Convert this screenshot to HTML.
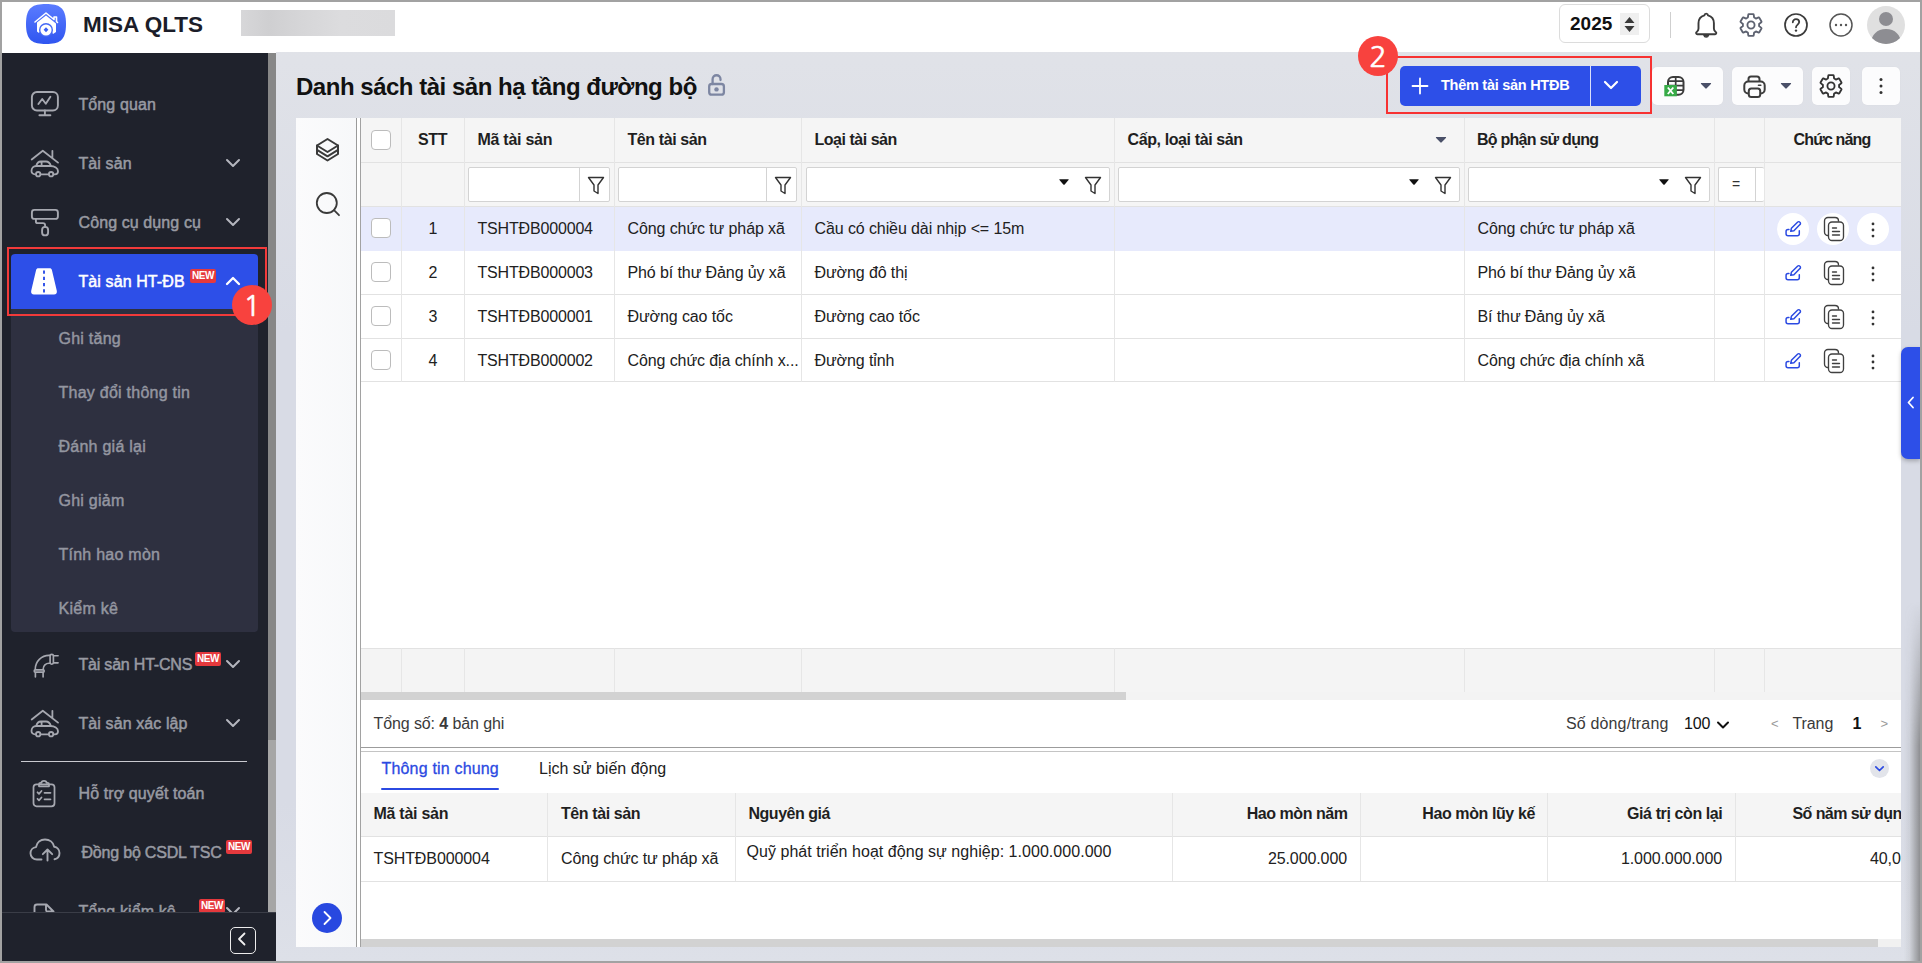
<!DOCTYPE html>
<html lang="vi">
<head>
<meta charset="utf-8">
<title>MISA QLTS</title>
<style>
*{box-sizing:border-box;margin:0;padding:0}
html,body{width:1922px;height:963px;overflow:hidden;background:#a2a2a2;font-family:"Liberation Sans",sans-serif;color:#1f1f1f}
.abs{position:absolute}
#app{position:absolute;left:2px;top:2px;width:1918px;height:959px;background:linear-gradient(180deg,#e1e3e8 0,#e0e2e8 60px,#d8dbe5 330px,#d8dbe5 800px,#dde0e8 100%);overflow:hidden}
/* header */
#hdr{position:absolute;left:0;top:0;width:1918px;height:50px;background:#fff;z-index:5}
#hstrip{position:absolute;left:0;top:50px;width:274px;height:1px;background:#fff;z-index:5}
#logo{position:absolute;left:24px;top:2px;width:40px;height:40px}
#brand{position:absolute;left:81px;top:9px;font-size:22.5px;font-weight:bold;color:#1b1d29;line-height:28px;white-space:nowrap}
#blur{position:absolute;left:239px;top:8px;width:154px;height:26px;background:linear-gradient(90deg,#d7d7d9,#cfcfd1 18%,#d6d6d8 40%,#dcdcde 65%,#dbdbdd)}
#year{position:absolute;left:1557px;top:2px;width:91px;height:39px;border:1px solid #dcdcdc;border-radius:6px;background:#fff}
#year span{position:absolute;left:10px;top:7px;font-size:19px;font-weight:bold;color:#111;line-height:24px}
#year i{position:absolute;left:60px;top:8px;width:19px;height:22px;background:#efefef;display:block}
#hsep{position:absolute;left:1668px;top:10px;width:1px;height:26px;background:#cfcfcf}
.hic{position:absolute;top:10px;width:26px;height:26px}
#avatar{position:absolute;left:1865px;top:4px;width:38px;height:38px;border-radius:50%;background:#e0e0e0;overflow:hidden}
/* sidebar */
#side{position:absolute;left:0;top:50px;width:266px;height:909px;background:#1f222c;overflow:hidden}
#sscroll{position:absolute;left:266px;top:50px;width:8px;height:909px;background:#a6a6a6}
#sthumb{position:absolute;left:0;top:0;width:8px;height:688px;background:#878787}
.mi{position:absolute;left:0;width:266px;height:56px}
.mi .ic{position:absolute;left:27px;top:13px;width:30px;height:30px}
.mi .tx{position:absolute;left:76.5px;top:18px;font-size:16px;line-height:22px;color:#989aa2;white-space:nowrap;-webkit-text-stroke:0.5px #989aa2;letter-spacing:0.1px}
.mi .chev{position:absolute;left:222.7px;top:22px;width:16px;height:12px}
.new{position:absolute;height:14px;border-radius:2px;background:#e5393d;color:#fff;font-size:10px;font-weight:bold;line-height:14px;padding:0 2px;letter-spacing:-0.5px}
#act{position:absolute;left:9px;top:202px;width:247px;height:55px;background:#2d4fe8;border-radius:4px 4px 0 0}
#sub{position:absolute;left:9px;top:257px;width:247px;height:323px;background:#2e3040;border-radius:0 0 4px 4px}
.si{position:absolute;left:47.5px;margin-top:1px;font-size:16px;line-height:22px;color:#9496a0;white-space:nowrap;-webkit-text-stroke:0.45px #9496a0;letter-spacing:0.25px}
#redbox1{position:absolute;left:5px;top:195px;width:260px;height:69px;border:2px solid #f23a3a}
.num{position:absolute;width:40px;height:40px;border-radius:50%;background:#f8423e;color:#fff;font-family:"NanumGothic","Liberation Sans",sans-serif;font-size:29px;line-height:42px;text-align:center;-webkit-text-stroke:0.5px #fff;z-index:9}
#sdiv{position:absolute;left:19px;top:709px;width:226px;height:1px;background:#c9cad0}
#sfoot{position:absolute;left:0;top:860px;width:274px;height:49px;background:#1f222c;border-top:1px solid #3a3d47}
#collapse{position:absolute;left:227.5px;top:14px;width:26.5px;height:26.5px;border:1.8px solid #ececec;border-radius:5px}
/*MAINCSS*/
#main{position:absolute;left:0;top:0;width:1918px;height:959px;pointer-events:none}
#title{position:absolute;left:294px;top:70px;font-size:24px;font-weight:bold;line-height:30px;color:#111;white-space:nowrap;letter-spacing:-0.48px}
#addbtn{position:absolute;left:1398px;top:64px;width:241px;height:40px;background:#2d4fe8;border-radius:5px}
#addbtn span{position:absolute;left:41px;top:10px;font-size:14.5px;font-weight:bold;color:#fff;line-height:18px;white-space:nowrap;letter-spacing:-0.27px}
#addbtn i{position:absolute;left:190px;top:0;width:1px;height:40px;background:#d9dffb}
#redbox2{position:absolute;left:1384px;top:54px;width:266px;height:58px;border:2px solid #f73232}
.tbtn{position:absolute;top:65px;height:38px;background:#fcfcfd;border-radius:5px;box-shadow:0 0 1px rgba(0,0,0,.08)}
#card{position:absolute;left:294px;top:116px;width:1605px;height:829px;background:#fff;overflow:hidden}
#lstrip{position:absolute;left:0;top:0;width:60px;height:829px;background:linear-gradient(90deg,#fbfbfc,#f7f8fa)}
.vl{position:absolute;top:0;width:1px;height:829px}
#ghead{position:absolute;background:#f5f5f5}
#gfoot{position:absolute;background:#f4f4f4}
#dhead{position:absolute;background:#f5f5f5}
.sel{position:absolute;background:#e7eafc}
.hl{position:absolute;height:1px;background:#e2e2e2}
.cl{position:absolute;width:1px;background:#e6e6e6;z-index:2}
.th{position:absolute;font-size:16px;font-weight:bold;line-height:22px;color:#1f1f1f;white-space:nowrap;letter-spacing:-0.45px}
.td{position:absolute;z-index:2;font-size:16px;line-height:22px;color:#212121;white-space:nowrap;letter-spacing:-0.1px}
.cb{position:absolute;z-index:2;width:20px;height:20px;border:1px solid #bcbcbc;border-radius:4px;background:#fff}
.fb{position:absolute;height:35px;background:#fff;border:1px solid #d3d3d3;border-radius:2px}
.fb i{position:absolute;top:0;width:1px;height:33px;background:#d3d3d3;display:block}
.pg{position:absolute;font-size:16px;line-height:22px;color:#3a3a3a;white-space:nowrap;letter-spacing:-0.1px}
.tab{position:absolute;font-size:16px;line-height:22px;color:#212121;white-space:nowrap}
#rtab{position:absolute;left:1899px;top:345px;width:19px;height:112px;background:#2d4fe8;border-radius:7px 0 0 7px;box-shadow:0 2px 4px rgba(0,0,0,.25)}
#rshadow{position:absolute;left:1902px;top:600px;width:16px;height:359px;background:linear-gradient(90deg,rgba(120,120,120,0),rgba(120,120,120,.12) 35%,rgba(110,110,110,.7));-webkit-mask-image:linear-gradient(180deg,transparent,#000 40%);mask-image:linear-gradient(180deg,transparent,#000 40%)}
/*MAINCSS-END*/
</style>
</head>
<body>
<div id="app">
<!--HEADER-->
<div id="hstrip"></div>
<div id="hdr">
  <svg id="logo" viewBox="0 0 40 40">
    <defs><linearGradient id="lg" x1="0" y1="0" x2="0" y2="1"><stop offset="0" stop-color="#5b7cff"/><stop offset="1" stop-color="#2f55f0"/></linearGradient></defs>
    <path d="M20 0C33 0 40 3 40 20C40 37 33 40 20 40C7 40 0 37 0 20C0 3 7 0 20 0Z" fill="url(#lg)"/>
    <path d="M9 18 L20 9 L28 15.5 V13 H30.5 V17.5 L31.5 18.5" fill="none" stroke="#fff" stroke-width="1.6" stroke-linejoin="round" stroke-linecap="round"/>
    <path d="M11 18.5 L20 11.5 L30 19.5 V28 L27 30 A8 8 0 0 0 13 29 L11 27.5Z" fill="#fff"/>
    <circle cx="20" cy="26" r="7" fill="#4468f5"/>
    <circle cx="20" cy="26" r="5.6" fill="#fff"/>
    <path d="M20 23.3 L22.4 25.8 L20 28.3 L17.6 25.8Z" fill="#3a5ff2"/>
  </svg>
  <div id="brand">MISA QLTS</div>
  <div id="blur"></div>
  <div id="year"><span>2025</span><i></i>
    <svg class="abs" style="left:63px;top:11px" width="13" height="17" viewBox="0 0 13 17"><path d="M6.5 1 L11.5 7 H1.5Z M6.5 16 L11.5 10 H1.5Z" fill="#3a3a3a"/></svg>
  </div>
  <div id="hsep"></div>
  <!-- bell -->
  <svg class="hic" style="left:1691px;top:10px;height:28px" viewBox="0 0 26 28"><path d="M13.200 1.600c-1 0-1.700.700-1.800 1.700C7.600 4.200 5.500 7.300 5.500 11.300v5.200c0 1.200-.5 2.200-1.400 3.100l-.6.600c-.8.800-.3 2 .8 2h17.800c1.100 0 1.600-1.200.8-2l-.6-.6c-.9-.9-1.400-1.900-1.400-3.100v-5.200c0-4-2.100-7.100-5.900-8-.1-1-.8-1.700-1.800-1.700Z" fill="none" stroke="#3b3b3b" stroke-width="1.900" stroke-linejoin="round"/><path d="M10.800 23.300a2.500 2.500 0 0 0 4.800 0Z" fill="#3b3b3b" stroke="#3b3b3b" stroke-width="1.200" stroke-linejoin="round"/></svg>
  <!-- gear -->
  <svg class="hic" style="left:1736px" viewBox="0 0 24 24"><path d="M19.430 12.980c.040-.320.070-.640.070-.980s-.030-.660-.070-.980l2.110-1.650c.190-.150.240-.420.120-.640l-2-3.460c-.120-.220-.390-.300-.610-.220l-2.490 1c-.520-.400-1.080-.730-1.690-.980l-.380-2.650C14.460 2.180 14.250 2 14 2h-4c-.250 0-.460.180-.490.420l-.380 2.650c-.610.250-1.170.590-1.690.980l-2.490-1c-.230-.090-.490 0-.610.220l-2 3.460c-.130.220-.070.490.120.640l2.110 1.650c-.040.320-.070.650-.070.980s.030.660.070.980l-2.110 1.650c-.190.150-.240.420-.120.640l2 3.460c.120.220.390.300.610.220l2.490-1c.520.400 1.080.730 1.690.980l.380 2.650c.030.240.240.420.490.420h4c.250 0 .460-.180.490-.420l.380-2.650c.610-.250 1.170-.590 1.690-.980l2.490 1c.230.090.490 0 .610-.220l2-3.460c.120-.220.070-.490-.120-.640l-2.110-1.650Z" fill="none" stroke="#5d6270" stroke-width="1.700" stroke-linejoin="round"/><circle cx="12" cy="12" r="3.300" fill="none" stroke="#5d6270" stroke-width="1.700"/></svg>
  <!-- help -->
  <svg class="hic" style="left:1781px" viewBox="0 0 26 26"><circle cx="13" cy="13" r="11" fill="none" stroke="#3b3b3b" stroke-width="1.700"/><path d="M9.800 10.300c0-1.900 1.400-3.100 3.200-3.100s3.200 1.200 3.200 2.900c0 2.400-3.200 2.600-3.200 5.200" fill="none" stroke="#3b3b3b" stroke-width="1.800" stroke-linecap="round"/><circle cx="13" cy="18.600" r="1.200" fill="#3b3b3b"/></svg>
  <!-- more -->
  <svg class="hic" style="left:1826px" viewBox="0 0 26 26"><circle cx="13" cy="13" r="11" fill="none" stroke="#555" stroke-width="1.500"/><circle cx="8" cy="13" r="1.200" fill="#555"/><circle cx="13" cy="13" r="1.200" fill="#555"/><circle cx="18" cy="13" r="1.200" fill="#555"/></svg>
  <div id="avatar"><svg width="38" height="38" viewBox="0 0 38 38"><circle cx="19" cy="13" r="7" fill="#8d8d92"/><path d="M4 38c0-9 6-15 15-15s15 6 15 15Z" fill="#8d8d92"/></svg></div>
</div>
<!--SIDEBAR-->
<div id="side">
  <!-- Tong quan -->
  <div class="mi" style="top:24px">
    <svg class="ic" viewBox="-0.900 0 30 30" fill="none" stroke="#a6a8b0" stroke-width="1.900" stroke-linecap="round" stroke-linejoin="round"><rect x="2" y="3" width="26" height="18.500" rx="5"/><path d="M15 21.500v4.500M9.500 26.300h11"/><path d="M8.500 15l3.800-5 3.600 4.800 4.600-7"/></svg>
    <div class="tx">Tổng quan</div>
  </div>
  <!-- Tai san -->
  <div class="mi" style="top:83px">
    <svg class="ic" style="width:32px" viewBox="0 0 32 30" fill="none" stroke="#a6a8b0" stroke-width="1.800" stroke-linecap="round" stroke-linejoin="round"><path d="M2.700 11.500L13.800 2.700 29 14.600M23.400 2.800V10"/><path d="M6.800 26.300H6c-2 0-3.500-1.300-3.500-3.300 0-2.800 2-5 4.800-5h14.200c4.200 0 7.500 2.200 7.500 5.200 0 1.900-1.300 3.100-3.200 3.100h-1.300M11.600 26.300h8.100"/><path d="M7.300 17.800c.7-2.500 2.200-4.300 4.400-4.300h5.300c2.300 0 4 1.700 4.800 4.300M12.600 13.700v4"/><circle cx="9.200" cy="26.200" r="2.200"/><circle cx="22.100" cy="26.200" r="2.200"/></svg>
    <div class="tx">Tài sản</div>
    <svg class="chev" viewBox="0 0 16 12"><path d="M2 3l6 6 6-6" fill="none" stroke="#b4b6be" stroke-width="2" stroke-linecap="round" stroke-linejoin="round"/></svg>
  </div>
  <!-- Cong cu dung cu -->
  <div class="mi" style="top:142px">
    <svg class="ic" viewBox="-0.900 -0.400 30 30" fill="none" stroke="#a6a8b0" stroke-width="1.900" stroke-linecap="round" stroke-linejoin="round"><rect x="2" y="2.500" width="26" height="9" rx="2.500"/><path d="M6 11.500v2.500c0 1 .700 1.700 1.700 1.700h5.300c1.300 0 2.200.900 2.200 2.200v1.600"/><rect x="12.200" y="19.500" width="6" height="8.500" rx="3"/></svg>
    <div class="tx">Công cụ dụng cụ</div>
    <svg class="chev" viewBox="0 0 16 12"><path d="M2 3l6 6 6-6" fill="none" stroke="#b4b6be" stroke-width="2" stroke-linecap="round" stroke-linejoin="round"/></svg>
  </div>
  <!-- active -->
  <div id="sub">
    <div class="si" style="top:18px">Ghi tăng</div>
    <div class="si" style="top:72px">Thay đổi thông tin</div>
    <div class="si" style="top:126px">Đánh giá lại</div>
    <div class="si" style="top:180px">Ghi giảm</div>
    <div class="si" style="top:234px">Tính hao mòn</div>
    <div class="si" style="top:288px">Kiểm kê</div>
  </div>
  <div id="act"></div>
  <div class="mi" style="top:201px">
    <svg class="ic" style="top:14px" viewBox="0 0 30 30"><path d="M9.300 1.200h11.400c1.100 0 1.900.700 2.200 1.700l4.900 20.800c.500 2-.700 3.800-2.800 3.800H5c-2.100 0-3.300-1.800-2.800-3.800L7.100 2.900c.300-1 1.100-1.700 2.200-1.700Z" fill="#fff"/><path d="M15 3.600v3.200M15 9.800v3.200M15 16v3.200M15 22.200v3.200" stroke="#2d4fe8" stroke-width="1.900" fill="none"/></svg>
    <div class="tx" style="color:#fff;-webkit-text-stroke:0.5px #fff">Tài sản HT-ĐB</div>
    <div class="new" style="left:188px;top:16px">NEW</div>
    <svg class="chev" viewBox="0 0 16 12"><path d="M2 9l6-6 6 6" fill="none" stroke="#fff" stroke-width="2.300" stroke-linecap="round" stroke-linejoin="round"/></svg>
  </div>
  <div id="redbox1"></div>
    <!-- HT-CNS -->
  <div class="mi" style="top:584px">
    <svg class="ic" viewBox="0 0 30 30" fill="none" stroke="#a6a8b0" stroke-width="1.650" stroke-linecap="round" stroke-linejoin="round"><path d="M6.300 20.500V20A13.700 13.700 0 0 1 20 6.300h1M14.200 20.500V20A5.800 5.800 0 0 1 20 14.200h1"/><rect x="21.100" y="5.300" width="3.300" height="9.900" rx="1.600"/><path d="M24.800 6.700h4.300M24.800 13.800h4.300"/><rect x="5.200" y="20.800" width="10" height="2.300" rx="1.100"/><path d="M6.400 23.600v4.300M14.100 23.600v4.300"/></svg>
    <div class="tx" style="letter-spacing:-0.2px">Tài sản HT-CNS</div>
    <div class="new" style="left:193px;top:16px">NEW</div>
    <svg class="chev" viewBox="0 0 16 12"><path d="M2 3l6 6 6-6" fill="none" stroke="#b4b6be" stroke-width="2" stroke-linecap="round" stroke-linejoin="round"/></svg>
  </div>
  <!-- xac lap -->
  <div class="mi" style="top:643px">
    <svg class="ic" style="width:32px" viewBox="0 0 32 30" fill="none" stroke="#a6a8b0" stroke-width="1.800" stroke-linecap="round" stroke-linejoin="round"><path d="M2.700 11.500L13.800 2.700 29 14.600M23.400 2.800V10"/><path d="M6.800 26.300H6c-2 0-3.500-1.300-3.500-3.300 0-2.800 2-5 4.800-5h14.200c4.200 0 7.500 2.200 7.500 5.200 0 1.900-1.300 3.100-3.200 3.100h-1.300M11.600 26.300h8.100"/><path d="M7.300 17.800c.7-2.500 2.200-4.300 4.400-4.300h5.300c2.300 0 4 1.700 4.800 4.300M12.600 13.700v4"/><circle cx="9.200" cy="26.200" r="2.200"/><circle cx="22.100" cy="26.200" r="2.200"/></svg>
    <div class="tx">Tài sản xác lập</div>
    <svg class="chev" viewBox="0 0 16 12"><path d="M2 3l6 6 6-6" fill="none" stroke="#b4b6be" stroke-width="2" stroke-linecap="round" stroke-linejoin="round"/></svg>
  </div>
  <div id="sdiv"></div>
  <!-- Ho tro quyet toan -->
  <div class="mi" style="top:713px">
    <svg class="ic" viewBox="0 -0.800 30 30" fill="none" stroke="#a6a8b0" stroke-width="1.750" stroke-linecap="round" stroke-linejoin="round"><rect x="4.500" y="5.500" width="21" height="22" rx="3"/><path d="M10 5.500c0-1 .500-1.500 1.500-1.500h1c0-1.200 1-2 2.500-2s2.500.800 2.500 2h1c1 0 1.500.500 1.500 1.500v2h-10Z"/><path d="M8.500 13.500l1.500 1.500 2.500-2.800M15.500 14h6M8.500 20l1.500 1.500 2.500-2.800M15.500 20.500h6"/></svg>
    <div class="tx">Hỗ trợ quyết toán</div>
  </div>
  <!-- Dong bo -->
  <div class="mi" style="top:772px">
    <svg class="ic" style="width:32px" viewBox="0 0 32 30" fill="none" stroke="#a6a8b0" stroke-width="1.900" stroke-linecap="round" stroke-linejoin="round"><path d="M12.500 22.500H8c-3.700 0-6.500-2.700-6.500-6.200 0-3.200 2.400-5.800 5.500-6.200C7.800 5.500 11.500 2.500 16 2.500c4.600 0 8.300 3 9.200 7.200 3 .500 5.300 3 5.300 6.200 0 3-2 5.600-5 6.300"/><path d="M18.500 23.500V13M13.800 17.200l4.700-4.700 4.700 4.700"/></svg>
    <div class="tx" style="left:79.5px;letter-spacing:-0.2px">Đồng bộ CSDL TSC</div>
    <div class="new" style="left:224px;top:16px">NEW</div>
  </div>
  <!-- Tong kiem ke -->
  <div class="mi" style="top:831px">
    <svg class="ic" style="top:18px" viewBox="0 0 30 30" fill="none" stroke="#a6a8b0" stroke-width="1.900" stroke-linecap="round" stroke-linejoin="round"><path d="M5.500 27V6c0-1.500 1-2.500 2.500-2.500h9.500l7 7V27M17 3.500v5.500c0 1 .500 1.500 1.500 1.500h5.500"/></svg>
    <div class="tx">Tổng kiểm kê</div>
    <div class="new" style="left:197px;top:16px">NEW</div>
    <svg class="chev" viewBox="0 0 16 12"><path d="M2 3l6 6 6-6" fill="none" stroke="#b4b6be" stroke-width="2" stroke-linecap="round" stroke-linejoin="round"/></svg>
  </div>
</div>
<div class="num" style="left:230px;top:282.5px">1</div>
<div id="sscroll"><div id="sthumb"></div></div>
<div id="sfoot" style="top:910px"><div id="collapse"><svg width="22" height="22" viewBox="0 0 22 22"><path d="M13.500 5.500l-5.500 5.500 5.500 5.500" fill="none" stroke="#f0f0f0" stroke-width="1.800" stroke-linecap="round" stroke-linejoin="round"/></svg></div></div>
<!--SIDEBAR-END-->
<!--MAIN-->
<div id="main">
<div id="title">Danh sách tài sản hạ tầng đường bộ</div>
<svg class="abs" style="left:704px;top:70px" width="20" height="26" viewBox="0 0 20 26" fill="none" stroke="#7d86a2" stroke-width="2.300" stroke-linecap="round"><path d="M6.600 12V7.200a3.950 3.950 0 0 1 7.900 0V8"/><rect x="3.200" y="12" width="14.700" height="10.700" rx="2.500"/><circle cx="10.500" cy="17.400" r="2.200" fill="#7d86a2" stroke="none"/></svg>
<div id="addbtn"><svg class="abs" style="left:11px;top:11px" width="18" height="18" viewBox="0 0 18 18"><path d="M9 1.500v15M1.500 9h15" stroke="#fff" stroke-width="1.800" stroke-linecap="round"/></svg><span>Thêm tài sản HTĐB</span><i></i><svg class="abs" style="left:203px;top:13px" width="16" height="12" viewBox="0 0 16 12"><path d="M2 3l6 6 6-6" fill="none" stroke="#fff" stroke-width="2.200" stroke-linecap="round" stroke-linejoin="round"/></svg></div>
<div id="redbox2"></div>
<div class="num" style="left:1356px;top:34px;z-index:9">2</div>
<div class="tbtn" style="left:1650px;width:71px">
<svg class="abs" style="left:9px;top:7px" width="28" height="26" viewBox="0 0 28 26"><rect x="7" y="3" width="15.500" height="17.800" rx="5" fill="none" stroke="#3c3c3c" stroke-width="2"/><path d="M7 7.200h15.500M7 11.700h15.500M7 16.200h15.500M14.700 3v17.800" stroke="#3c3c3c" stroke-width="1.700" fill="none"/><rect x="3.300" y="11" width="12.500" height="11.300" fill="#37ab47"/><path d="M6.800 13.500l5.500 6.500M12.300 13.500l-5.500 6.500" stroke="#fff" stroke-width="1.900"/></svg>
<svg class="abs" style="left:48px;top:15px" width="12" height="8" viewBox="0 0 12 8"><path d="M1.500 1h9c.6 0 .8.500.400 1L6.700 6.300c-.4.500-1 .5-1.400 0L1.100 2c-.4-.5-.2-1 .4-1Z" fill="#4a5068"/></svg></div>
<div class="tbtn" style="left:1730px;width:71px">
<svg class="abs" style="left:9px;top:7px" width="26" height="26" viewBox="0 0 26 26" fill="none" stroke="#3c3c3c" stroke-width="2" stroke-linejoin="round"><path d="M7.500 7.500V5c0-1.700 1-2.500 2.500-2.500h6c1.500 0 2.500.800 2.500 2.500v2.500"/><rect x="3.300" y="7.500" width="20.400" height="12" rx="4"/><rect x="7.800" y="14.500" width="11.400" height="8.500" rx="2.500" fill="#fcfcfd"/><path d="M17.500 11.200h2.300" stroke-linecap="round" stroke-width="1.600"/></svg>
<svg class="abs" style="left:48px;top:15px" width="12" height="8" viewBox="0 0 12 8"><path d="M1.500 1h9c.6 0 .8.500.400 1L6.700 6.300c-.4.500-1 .5-1.400 0L1.100 2c-.4-.5-.2-1 .4-1Z" fill="#4a5068"/></svg></div>
<div class="tbtn" style="left:1810px;width:38px"><svg class="abs" style="left:6px;top:6px" width="26" height="26" viewBox="0 0 24 24"><path d="M19.430 12.980c.040-.320.070-.640.070-.980s-.030-.660-.070-.980l2.110-1.650c.190-.150.240-.420.120-.640l-2-3.460c-.120-.220-.390-.300-.610-.220l-2.490 1c-.520-.400-1.080-.730-1.690-.980l-.380-2.650C14.460 2.180 14.250 2 14 2h-4c-.250 0-.460.180-.490.420l-.380 2.650c-.610.250-1.170.590-1.690.980l-2.490-1c-.230-.090-.490 0-.610.220l-2 3.460c-.130.220-.070.490.120.640l2.110 1.650c-.040.320-.070.650-.070.980s.030.660.070.980l-2.110 1.650c-.190.150-.240.420-.120.640l2 3.460c.120.220.390.300.610.220l2.490-1c.520.400 1.080.730 1.690.980l.380 2.650c.030.240.240.420.490.420h4c.250 0 .460-.180.490-.420l.380-2.650c.610-.250 1.170-.590 1.690-.980l2.490 1c.230.090.490 0 .610-.220l2-3.460c.120-.220.070-.490-.120-.640l-2.110-1.650Z" fill="none" stroke="#333" stroke-width="1.700" stroke-linejoin="round"/><circle cx="12" cy="12" r="3.300" fill="none" stroke="#333" stroke-width="1.700"/></svg></div>
<div class="tbtn" style="left:1860px;width:38px"><svg class="abs" style="left:17px;top:10px" width="4" height="18" viewBox="0 0 4 18"><circle cx="2" cy="2.500" r="1.500" fill="#333"/><circle cx="2" cy="9" r="1.500" fill="#333"/><circle cx="2" cy="15.500" r="1.500" fill="#333"/></svg></div>
<div id="card">
<div id="lstrip"></div><div class="vl" style="left:60px;background:#9a9a9a"></div><div class="vl" style="left:64px;background:#a2a2a2"></div>
<svg class="abs" style="left:19px;top:19px" width="25" height="26" viewBox="0 0 25 26" fill="none" stroke="#3a3a3a" stroke-width="2" stroke-linejoin="round" stroke-linecap="round"><path d="M12.500 2L23 8.500 12.500 15 2 8.500Z"/><path d="M2 8.500v8.500l10.500 6.500L23 17V8.500"/><path d="M2 12.800l10.500 6.500L23 12.800"/></svg>
<svg class="abs" style="left:18px;top:73px" width="28" height="28" viewBox="0 0 28 28" fill="none" stroke="#3a3a3a" stroke-width="1.800" stroke-linecap="round"><circle cx="12.800" cy="12" r="10"/><path d="M20 19.200l5 5"/></svg>
<div class="abs" style="left:16px;top:785px;width:30px;height:30px;border-radius:50%;background:#2848e0"><svg width="30" height="30" viewBox="0 0 30 30"><path d="M12.500 9l6 6-6 6" fill="none" stroke="#fff" stroke-width="1.800" stroke-linecap="round" stroke-linejoin="round"/></svg></div>
<div id="ghead" style="left:65px;top:0;width:1540px;height:89px"></div>
<div class="sel" style="left:65px;top:89px;width:1540px;height:44px;z-index:1"></div>
<div id="gfoot" style="left:65px;top:530px;width:1540px;height:44px"></div>
<div class="hl" style="left:65px;top:44px;width:1540px"></div>
<div class="hl" style="left:65px;top:88px;width:1540px"></div>
<div class="hl" style="left:65px;top:132px;width:1540px"></div>
<div class="hl" style="left:65px;top:176px;width:1540px"></div>
<div class="hl" style="left:65px;top:220px;width:1540px"></div>
<div class="hl" style="left:65px;top:263px;width:1540px"></div>
<div class="hl" style="left:65px;top:530.0px;width:1540px"></div>
<div class="cl" style="left:105.0px;top:0;height:264px"></div>
<div class="cl" style="left:105.0px;top:530px;height:44px"></div>
<div class="cl" style="left:168.0px;top:0;height:264px"></div>
<div class="cl" style="left:168.0px;top:530px;height:44px"></div>
<div class="cl" style="left:318.0px;top:0;height:264px"></div>
<div class="cl" style="left:318.0px;top:530px;height:44px"></div>
<div class="cl" style="left:505.0px;top:0;height:264px"></div>
<div class="cl" style="left:505.0px;top:530px;height:44px"></div>
<div class="cl" style="left:818.0px;top:0;height:264px"></div>
<div class="cl" style="left:818.0px;top:530px;height:44px"></div>
<div class="cl" style="left:1168.0px;top:0;height:264px"></div>
<div class="cl" style="left:1168.0px;top:530px;height:44px"></div>
<div class="cl" style="left:1418.0px;top:0;height:264px"></div>
<div class="cl" style="left:1418.0px;top:530px;height:44px"></div>
<div class="cl" style="left:1468.0px;top:0;height:264px"></div>
<div class="cl" style="left:1468.0px;top:530px;height:44px"></div>
<div class="th" style="left:122.0px;top:11px;letter-spacing:-0.40px">STT</div>
<div class="th" style="left:181.5px;top:11px;letter-spacing:-0.27px">Mã tài sản</div>
<div class="th" style="left:331.5px;top:11px;letter-spacing:-0.41px">Tên tài sản</div>
<div class="th" style="left:518.5px;top:11px;letter-spacing:-0.48px">Loại tài sản</div>
<div class="th" style="left:831.5px;top:11px;letter-spacing:-0.39px">Cấp, loại tài sản</div>
<div class="th" style="left:1181.0px;top:11px;letter-spacing:-0.75px">Bộ phận sử dụng</div>
<div class="th" style="left:1497.5px;top:11px;letter-spacing:-0.84px">Chức năng</div>
<svg class="abs" style="left:1139px;top:18px" width="12" height="8" viewBox="0 0 12 8"><path d="M1.500 1h9c.6 0 .8.500.400 1L6.700 6.300c-.4.500-1 .5-1.400 0L1.100 2c-.4-.5-.2-1 .4-1Z" fill="#4a5068"/></svg>
<div class="cb" style="left:75px;top:12px"></div>
<div class="cb" style="left:75px;top:100px"></div>
<div class="cb" style="left:75px;top:144px"></div>
<div class="cb" style="left:75px;top:188px"></div>
<div class="cb" style="left:75px;top:232px"></div>
<div class="fb" style="left:172px;top:49px;width:142px"><i style="left:110px"></i><svg class="abs" style="left:118px;top:8px" width="18" height="19" viewBox="0 0 18 19"><path d="M1.500 1.500h15L11 9v8.500l-4-2.500V9Z" fill="none" stroke="#333" stroke-width="1.400" stroke-linejoin="round"/></svg></div>
<div class="fb" style="left:322px;top:49px;width:179px"><i style="left:147px"></i><svg class="abs" style="left:155px;top:8px" width="18" height="19" viewBox="0 0 18 19"><path d="M1.500 1.500h15L11 9v8.500l-4-2.500V9Z" fill="none" stroke="#333" stroke-width="1.400" stroke-linejoin="round"/></svg></div>
<div class="fb" style="left:510px;top:49px;width:304px"><svg class="abs" style="left:252px;top:11px" width="10" height="6" viewBox="0 0 10 6"><path d="M.8.300h8.400c.5 0 .6.400.300.800L5.700 5.400c-.4.400-1 .4-1.400 0L.5 1.100C.2.700.3.300.8.300Z" fill="#111"/></svg><svg class="abs" style="left:277px;top:8px" width="18" height="19" viewBox="0 0 18 19"><path d="M1.500 1.500h15L11 9v8.500l-4-2.500V9Z" fill="none" stroke="#333" stroke-width="1.400" stroke-linejoin="round"/></svg></div>
<div class="fb" style="left:822px;top:49px;width:342px"><svg class="abs" style="left:290px;top:11px" width="10" height="6" viewBox="0 0 10 6"><path d="M.8.300h8.400c.5 0 .6.400.300.800L5.700 5.400c-.4.400-1 .4-1.400 0L.5 1.100C.2.700.3.300.8.300Z" fill="#111"/></svg><svg class="abs" style="left:315px;top:8px" width="18" height="19" viewBox="0 0 18 19"><path d="M1.500 1.500h15L11 9v8.500l-4-2.500V9Z" fill="none" stroke="#333" stroke-width="1.400" stroke-linejoin="round"/></svg></div>
<div class="fb" style="left:1172px;top:49px;width:242px"><svg class="abs" style="left:190px;top:11px" width="10" height="6" viewBox="0 0 10 6"><path d="M.8.300h8.400c.5 0 .6.400.300.800L5.700 5.400c-.4.400-1 .4-1.400 0L.5 1.100C.2.700.3.300.8.300Z" fill="#111"/></svg><svg class="abs" style="left:215px;top:8px" width="18" height="19" viewBox="0 0 18 19"><path d="M1.500 1.500h15L11 9v8.500l-4-2.500V9Z" fill="none" stroke="#333" stroke-width="1.400" stroke-linejoin="round"/></svg></div>
<div class="fb" style="left:1422px;top:49px;width:46px;border-right:0"><i style="left:36px"></i><span style="position:absolute;left:13px;top:7px;font-size:14px;line-height:18px;color:#333">=</span></div>
<div class="td" style="left:105.5px;top:99.5px;width:63px;text-align:center">1</div>
<div class="td" style="left:181.5px;top:99.5px;letter-spacing:-0.17px">TSHTĐB000004</div>
<div class="td" style="left:331.5px;top:99.5px">Công chức tư pháp xã</div>
<div class="td" style="left:518.5px;top:99.5px">Cầu có chiều dài nhịp &lt;= 15m</div>
<div class="td" style="left:1181.5px;top:99.5px">Công chức tư pháp xã</div>
<div class="abs" style="left:1481px;top:95.0px;width:32px;height:32px;border-radius:50%;background:#fff;z-index:2"></div>
<div class="abs" style="left:1521px;top:95.0px;width:32px;height:32px;border-radius:50%;background:#fff;z-index:2"></div>
<div class="abs" style="left:1561px;top:95.0px;width:32px;height:32px;border-radius:50%;background:#fff;z-index:2"></div>
<svg class="abs" style="z-index:3;left:1488.0px;top:102.3px" width="18" height="18" viewBox="0 0 20 20" fill="none" stroke="#2b4ae2" stroke-width="1.650" stroke-linejoin="round" stroke-linecap="round"><path d="M7.500 12.500l.700-3.300L15 2.400c.8-.8 2-.8 2.700 0 .8.800.8 2 0 2.700L11 11.900Z"/><path d="M5.500 10.500H4.500c-1.300 0-2.200.9-2.200 2.200v2.600c0 1.300.9 2.200 2.200 2.200h10.300c1.300 0 2.200-.9 2.200-2.200V12"/></svg>
<svg class="abs" style="z-index:3;left:1526.7px;top:98.3px" width="22" height="26" viewBox="0 0 22 26" fill="none" stroke="#404040" stroke-width="1.350" stroke-linejoin="round" stroke-linecap="round"><path d="M5 19.500c-2 0-3.500-1.500-3.500-3.500V5c0-2 1.500-3.500 3.500-3.500h7c2 0 3.500 1.500 3.500 3.500"/><rect x="5.500" y="6" width="15" height="18.500" rx="3.500" fill="#fff"/><path d="M9.500 12h4M9.500 15.500h7M9.500 19h7"/></svg>
<svg class="abs" style="z-index:3;left:1575.0px;top:102.5px" width="4" height="18" viewBox="0 0 4 18"><circle cx="2" cy="2.900" r="1.400" fill="#333"/><circle cx="2" cy="9" r="1.400" fill="#333"/><circle cx="2" cy="15.100" r="1.400" fill="#333"/></svg>
<div class="td" style="left:105.5px;top:143.5px;width:63px;text-align:center">2</div>
<div class="td" style="left:181.5px;top:143.5px;letter-spacing:-0.17px">TSHTĐB000003</div>
<div class="td" style="left:331.5px;top:143.5px">Phó bí thư Đảng ủy xã</div>
<div class="td" style="left:518.5px;top:143.5px">Đường đô thị</div>
<div class="td" style="left:1181.5px;top:143.5px">Phó bí thư Đảng ủy xã</div>
<svg class="abs" style="z-index:3;left:1488.0px;top:146.3px" width="18" height="18" viewBox="0 0 20 20" fill="none" stroke="#2b4ae2" stroke-width="1.650" stroke-linejoin="round" stroke-linecap="round"><path d="M7.500 12.500l.700-3.300L15 2.400c.8-.8 2-.8 2.700 0 .8.800.8 2 0 2.700L11 11.900Z"/><path d="M5.500 10.500H4.500c-1.300 0-2.200.9-2.200 2.200v2.600c0 1.300.9 2.200 2.200 2.200h10.300c1.300 0 2.200-.9 2.200-2.200V12"/></svg>
<svg class="abs" style="z-index:3;left:1526.7px;top:142.3px" width="22" height="26" viewBox="0 0 22 26" fill="none" stroke="#404040" stroke-width="1.350" stroke-linejoin="round" stroke-linecap="round"><path d="M5 19.500c-2 0-3.500-1.500-3.500-3.500V5c0-2 1.500-3.500 3.500-3.500h7c2 0 3.500 1.500 3.500 3.500"/><rect x="5.500" y="6" width="15" height="18.500" rx="3.500" fill="#fff"/><path d="M9.500 12h4M9.500 15.500h7M9.500 19h7"/></svg>
<svg class="abs" style="z-index:3;left:1575.0px;top:146.5px" width="4" height="18" viewBox="0 0 4 18"><circle cx="2" cy="2.900" r="1.400" fill="#333"/><circle cx="2" cy="9" r="1.400" fill="#333"/><circle cx="2" cy="15.100" r="1.400" fill="#333"/></svg>
<div class="td" style="left:105.5px;top:187.5px;width:63px;text-align:center">3</div>
<div class="td" style="left:181.5px;top:187.5px;letter-spacing:-0.17px">TSHTĐB000001</div>
<div class="td" style="left:331.5px;top:187.5px">Đường cao tốc</div>
<div class="td" style="left:518.5px;top:187.5px">Đường cao tốc</div>
<div class="td" style="left:1181.5px;top:187.5px">Bí thư Đảng ủy xã</div>
<svg class="abs" style="z-index:3;left:1488.0px;top:190.3px" width="18" height="18" viewBox="0 0 20 20" fill="none" stroke="#2b4ae2" stroke-width="1.650" stroke-linejoin="round" stroke-linecap="round"><path d="M7.500 12.500l.700-3.300L15 2.400c.8-.8 2-.8 2.700 0 .8.800.8 2 0 2.700L11 11.900Z"/><path d="M5.500 10.500H4.500c-1.300 0-2.200.9-2.200 2.200v2.600c0 1.300.9 2.200 2.200 2.200h10.300c1.300 0 2.200-.9 2.200-2.200V12"/></svg>
<svg class="abs" style="z-index:3;left:1526.7px;top:186.3px" width="22" height="26" viewBox="0 0 22 26" fill="none" stroke="#404040" stroke-width="1.350" stroke-linejoin="round" stroke-linecap="round"><path d="M5 19.500c-2 0-3.500-1.500-3.500-3.500V5c0-2 1.500-3.500 3.500-3.500h7c2 0 3.500 1.500 3.500 3.500"/><rect x="5.500" y="6" width="15" height="18.500" rx="3.500" fill="#fff"/><path d="M9.500 12h4M9.500 15.500h7M9.500 19h7"/></svg>
<svg class="abs" style="z-index:3;left:1575.0px;top:190.5px" width="4" height="18" viewBox="0 0 4 18"><circle cx="2" cy="2.900" r="1.400" fill="#333"/><circle cx="2" cy="9" r="1.400" fill="#333"/><circle cx="2" cy="15.100" r="1.400" fill="#333"/></svg>
<div class="td" style="left:105.5px;top:231.5px;width:63px;text-align:center">4</div>
<div class="td" style="left:181.5px;top:231.5px;letter-spacing:-0.17px">TSHTĐB000002</div>
<div class="td" style="left:331.5px;top:231.5px">Công chức địa chính x...</div>
<div class="td" style="left:518.5px;top:231.5px">Đường tỉnh</div>
<div class="td" style="left:1181.5px;top:231.5px">Công chức địa chính xã</div>
<svg class="abs" style="z-index:3;left:1488.0px;top:234.3px" width="18" height="18" viewBox="0 0 20 20" fill="none" stroke="#2b4ae2" stroke-width="1.650" stroke-linejoin="round" stroke-linecap="round"><path d="M7.500 12.500l.700-3.300L15 2.400c.8-.8 2-.8 2.700 0 .8.800.8 2 0 2.700L11 11.900Z"/><path d="M5.500 10.500H4.500c-1.300 0-2.200.9-2.200 2.200v2.600c0 1.300.9 2.200 2.200 2.200h10.300c1.300 0 2.200-.9 2.200-2.200V12"/></svg>
<svg class="abs" style="z-index:3;left:1526.7px;top:230.3px" width="22" height="26" viewBox="0 0 22 26" fill="none" stroke="#404040" stroke-width="1.350" stroke-linejoin="round" stroke-linecap="round"><path d="M5 19.500c-2 0-3.500-1.500-3.500-3.500V5c0-2 1.500-3.500 3.500-3.500h7c2 0 3.500 1.500 3.500 3.500"/><rect x="5.500" y="6" width="15" height="18.500" rx="3.500" fill="#fff"/><path d="M9.500 12h4M9.500 15.500h7M9.500 19h7"/></svg>
<svg class="abs" style="z-index:3;left:1575.0px;top:234.5px" width="4" height="18" viewBox="0 0 4 18"><circle cx="2" cy="2.900" r="1.400" fill="#333"/><circle cx="2" cy="9" r="1.400" fill="#333"/><circle cx="2" cy="15.100" r="1.400" fill="#333"/></svg>
<div class="abs" style="left:65px;top:574px;width:1540px;height:8px;background:#f3f3f3"></div>
<div class="abs" style="left:65px;top:574px;width:765px;height:8px;background:#d2d2d2"></div>
<div class="pg" style="left:77.5px;top:595px">Tổng số: <b>4</b> bản ghi</div>
<div class="pg" style="left:1270.0px;top:595px;letter-spacing:0.15px">Số dòng/trang</div>
<div class="pg" style="left:1388.0px;top:595px;color:#111">100</div>
<svg class="abs" style="left:1420px;top:602px" width="14" height="10" viewBox="0 0 14 10"><path d="M2 2.500l5 5 5-5" fill="none" stroke="#111" stroke-width="2" stroke-linecap="round" stroke-linejoin="round"/></svg>
<div class="pg" style="left:1475.0px;top:595px;color:#9a9a9a;font-size:13px">&lt;</div>
<div class="pg" style="left:1496.5px;top:595px">Trang</div>
<div class="pg" style="left:1556.5px;top:595px;font-weight:bold;color:#111">1</div>
<div class="pg" style="left:1584.5px;top:595px;color:#9a9a9a;font-size:13px">&gt;</div>
<div class="abs" style="left:65px;top:628.5px;width:1540px;height:1px;background:#9c9c9c"></div>
<div class="abs" style="left:65px;top:632.5px;width:1540px;height:1px;background:#c4c4c4"></div>
<div class="tab" style="left:85.5px;top:640px;color:#2b4ae2;-webkit-text-stroke:0.3px #2b4ae2;letter-spacing:0.18px">Thông tin chung</div>
<div class="abs" style="left:85.0px;top:669.5px;width:118px;height:2.500px;border-radius:2px;background:#2b4ae2"></div>
<div class="tab" style="left:243.0px;top:640px">Lịch sử biến động</div>
<div class="abs" style="left:1573.8px;top:640.7px;width:19px;height:19px;border-radius:50%;background:#e2e4ea"><svg width="19" height="19" viewBox="0 0 19 19"><path d="M5.800 7.800l3.700 3.700 3.700-3.700" fill="none" stroke="#2b4ae2" stroke-width="1.700" stroke-linecap="round" stroke-linejoin="round"/></svg></div>
<div id="dhead" style="left:65px;top:675px;width:1540px;height:43px"></div>
<div class="hl" style="left:65px;top:718.0px;width:1540px"></div>
<div class="hl" style="left:65px;top:763.0px;width:1540px"></div>
<div class="cl" style="left:251.0px;top:675px;height:88px"></div>
<div class="cl" style="left:439.0px;top:675px;height:88px"></div>
<div class="cl" style="left:876.0px;top:675px;height:88px"></div>
<div class="cl" style="left:1064.0px;top:675px;height:88px"></div>
<div class="cl" style="left:1251.0px;top:675px;height:88px"></div>
<div class="cl" style="left:1439.0px;top:675px;height:88px"></div>
<div class="th" style="left:77.5px;top:685px;letter-spacing:-0.27px">Mã tài sản</div>
<div class="th" style="left:265.0px;top:685px;letter-spacing:-0.41px">Tên tài sản</div>
<div class="th" style="left:452.5px;top:685px;letter-spacing:-0.48px">Nguyên giá</div>
<div class="th" style="right:553.5px;top:685px;letter-spacing:-0.45px">Hao mòn năm</div>
<div class="th" style="right:366.1px;top:685px;letter-spacing:-0.40px">Hao mòn lũy kế</div>
<div class="th" style="right:178.6px;top:685px;letter-spacing:-0.40px">Giá trị còn lại</div>
<div class="th" style="left:1496.4px;top:685px;letter-spacing:-0.55px">Số năm sử dụng</div>
<div class="td" style="left:77.5px;top:729.5px">TSHTĐB000004</div>
<div class="td" style="left:265.0px;top:729.5px">Công chức tư pháp xã</div>
<div class="td" style="left:450.5px;top:723.0px;letter-spacing:0.04px">Quỹ phát triển hoạt động sự nghiệp: 1.000.000.000</div>
<div class="td" style="right:554.0px;top:729.5px">25.000.000</div>
<div class="td" style="right:179.0px;top:729.5px">1.000.000.000</div>
<div class="td" style="left:1574.0px;top:729.5px">40,00</div>
<div class="abs" style="left:65px;top:821px;width:1540px;height:8px;background:#f1f1f1"></div>
<div class="abs" style="left:65px;top:821px;width:1517px;height:8px;background:#d2d2d2"></div>
</div>
<div id="rtab"><svg width="19" height="112" viewBox="0 0 19 112"><path d="M12 50.500l-4.500 5 4.500 5" fill="none" stroke="#fff" stroke-width="1.800" stroke-linecap="round" stroke-linejoin="round"/></svg></div>
<div id="rshadow"></div>
</div>
<!--MAIN-END-->
</div>
</body>
</html>
